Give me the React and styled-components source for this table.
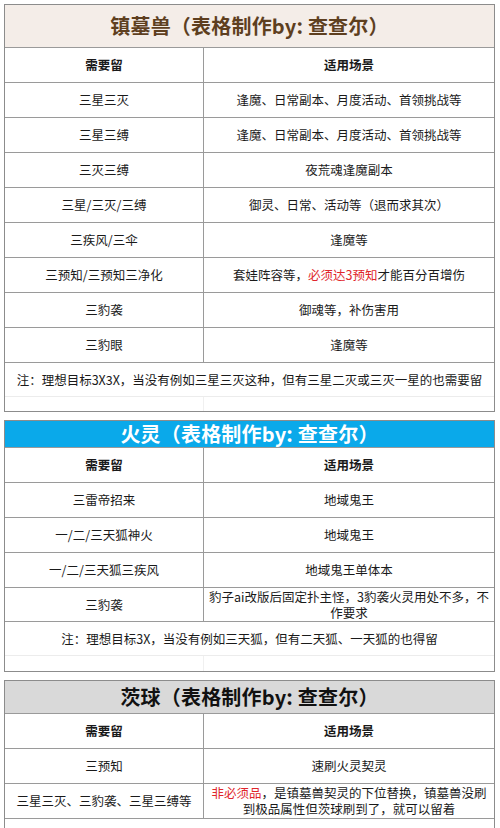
import React from "react";
import styled, { createGlobalStyle } from "styled-components";

const Global = createGlobalStyle`
  * { box-sizing: border-box; }
  html, body { margin: 0; padding: 0; background: #ffffff; }
  body {
    font-family: "Noto Sans CJK SC", "Noto Sans", sans-serif;
    color: #1a1a1a;
  }
`;

const Page = styled.div`
  width: 500px;
  height: 828px;
  overflow: hidden;
  padding: 4px 5px 0 4px;
  display: flex;
  flex-direction: column;
  gap: 8px;
`;

const Table = styled.div`
  border: 1.5px solid #8c8c8c;
  display: flex;
  flex-direction: column;
  background: #fff;
`;

const TitleBar = styled.div`
  height: ${(p) => p.$h}px;
  background: ${(p) => p.$bg};
  color: ${(p) => p.$fg};
  display: flex;
  align-items: center;
  justify-content: center;
  font-size: 20px;
  font-weight: 700;
  letter-spacing: 0.2px;
  line-height: 1;
`;

const Row = styled.div`
  display: grid;
  grid-template-columns: 198px 1fr;
  min-height: ${(p) => p.$h || 35}px;
  border-top: 1px solid #9a9a9a;
`;

const Cell = styled.div`
  display: flex;
  align-items: center;
  justify-content: center;
  text-align: center;
  padding: 0 4px;
  font-size: 12.5px;
  line-height: 16px;
  font-weight: ${(p) => (p.$bold ? 700 : 400)};
  & + & {
    border-left: 1px solid #9a9a9a;
  }
`;

const NoteRow = styled.div`
  display: flex;
  align-items: center;
  justify-content: center;
  height: ${(p) => p.$h || 34}px;
  border-top: 1px solid #9a9a9a;
  font-size: 12.5px;
  line-height: 16px;
  text-align: center;
  padding: 0 4px;
`;

const BlankRow = styled.div`
  display: grid;
  grid-template-columns: 198px 1fr;
  height: ${(p) => p.$h}px;
  border-top: 1px solid #ececec;
`;

const BlankCell = styled.div`
  & + & {
    border-left: 1px solid ${(p) => (p.$faint ? "#f0f0f0" : "transparent")};
  }
`;

const Red = styled.span`
  color: #e0262b;
`;

const Header = () => (
  <Row>
    <Cell $bold>需要留</Cell>
    <Cell $bold>适用场景</Cell>
  </Row>
);

const rows1 = [
  ["三星三灭", "逢魔、日常副本、月度活动、首领挑战等"],
  ["三星三缚", "逢魔、日常副本、月度活动、首领挑战等"],
  ["三灭三缚", "夜荒魂逢魔副本"],
  ["三星/三灭/三缚", "御灵、日常、活动等（退而求其次）"],
  ["三疾风/三伞", "逢魔等"],
  [
    "三预知/三预知三净化",
    <>
      套娃阵容等，<Red>必须达3预知</Red>才能百分百增伤
    </>,
  ],
  ["三豹袭", "御魂等，补伤害用"],
  ["三豹眼", "逢魔等"],
];

const rows2 = [
  ["三雷帝招来", "地域鬼王"],
  ["一/二/三天狐神火", "地域鬼王"],
  ["一/二/三天狐三疾风", "地域鬼王单体本"],
];

export default function App() {
  return (
    <>
      <Global />
      <Page>
        <Table>
          <TitleBar $h={42} $bg="#f4ede8" $fg="#5e3f1f">
            镇墓兽（表格制作by: 查查尔）
          </TitleBar>
          <Header />
          {rows1.map(([a, b], i) => (
            <Row key={i}>
              <Cell>{a}</Cell>
              <Cell>{b}</Cell>
            </Row>
          ))}
          <NoteRow>
            注：理想目标3X3X，当没有例如三星三灭这种，但有三星二灭或三灭一星的也需要留
          </NoteRow>
          <BlankRow $h={15}>
            <BlankCell />
            <BlankCell />
          </BlankRow>
        </Table>

        <Table>
          <TitleBar $h={26} $bg="#0aa9ea" $fg="#ffffff">
            火灵（表格制作by: 查查尔）
          </TitleBar>
          <Header />
          {rows2.map(([a, b], i) => (
            <Row key={i}>
              <Cell>{a}</Cell>
              <Cell>{b}</Cell>
            </Row>
          ))}
          <Row $h={34}>
            <Cell>三豹袭</Cell>
            <Cell>
              豹子ai改版后固定扑主怪，3豹袭火灵用处不多，不
              <br />
              作要求
            </Cell>
          </Row>
          <NoteRow>
            注：理想目标3X，当没有例如三天狐，但有二天狐、一天狐的也得留
          </NoteRow>
          <BlankRow $h={16}>
            <BlankCell />
            <BlankCell $faint />
          </BlankRow>
        </Table>

        <Table>
          <TitleBar $h={32} $bg="#d9d9d9" $fg="#111111">
            茨球（表格制作by: 查查尔）
          </TitleBar>
          <Header />
          <Row>
            <Cell>三预知</Cell>
            <Cell>速刷火灵契灵</Cell>
          </Row>
          <Row>
            <Cell>三星三灭、三豹袭、三星三缚等</Cell>
            <Cell>
              <span>
                <Red>非必须品</Red>，是镇墓兽契灵的下位替换，镇墓兽没刷
                <br />
                到极品属性但茨球刷到了，就可以留着
              </span>
            </Cell>
          </Row>
          <NoteRow>
            解释：茨球、镇墓兽在阴阳师放技能后，契灵均不会出现动画
          </NoteRow>
        </Table>
      </Page>
    </>
  );
}
